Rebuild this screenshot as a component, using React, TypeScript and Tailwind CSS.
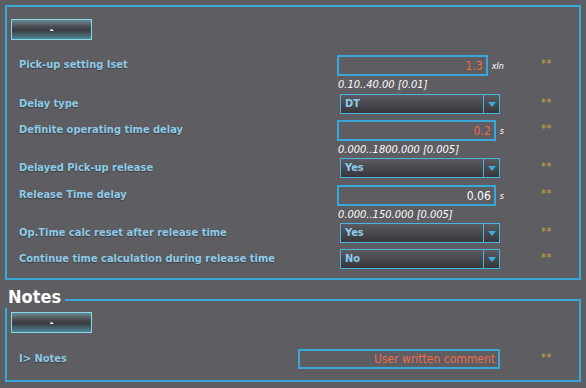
import { ReactNode } from "react";

const font = { fontFamily: "Tahoma, 'DejaVu Sans Condensed', 'DejaVu Sans', sans-serif" };

function Stars() {
  return <span className="w-[40px] pl-[37px] pt-[3px] text-[11px] leading-none tracking-[0.5px] text-[#c9a83a]">**</span>;
}

function Label({ children, w = "w-[330px]" }: { children: ReactNode; w?: string }) {
  return (
    <div className={`${w} pl-[12px] text-[11px] font-bold text-[#8ecbe8] [text-shadow:0_1px_1px_rgba(0,0,0,0.35)]`}>
      {children}
    </div>
  );
}

function MinusButton() {
  return (
    <div className="ml-[4px] flex h-[21px] w-[81px] items-center justify-center border border-[#86d6ec] bg-[linear-gradient(180deg,#6c8a92_0%,#4a4c52_35%,#3b3c41_55%,#4f8796_100%)] text-[10px] font-bold leading-none text-white">
      -
    </div>
  );
}

function NumberRow({ label, value, unit, range, valueColor = "text-[#ec6b4c]" }: { label: string; value: string; unit: string; range: string; valueColor?: string }) {
  return (
    <div className="flex h-[38px] items-start">
      <div className="flex h-[21px] items-center">
        <Label>{label}</Label>
      </div>
      <div className="flex w-[167px] flex-col">
        <div className="flex items-center">
          <div className={`flex h-[21px] w-[163px] items-center justify-end border-2 border-[#38a8d8] pr-[3px] text-[12px] ${valueColor}`}>
            {value}
          </div>
          <span className="pl-[4px] pt-[3px] text-[9px] italic text-white">{unit}</span>
        </div>
        <div className="pl-[1px] pt-[3px] text-[11px] italic leading-none text-white">{range}</div>
      </div>
      <Stars />
    </div>
  );
}

function SelectRow({ label, value, h = "h-[26px]" }: { label: string; value: string; h?: string }) {
  return (
    <div className={`flex items-start ${h}`}>
      <div className="flex h-[20px] items-center">
        <Label>{label}</Label>
      </div>
      <div className="flex w-[167px]">
        <div className="ml-[3px] flex h-[20px] w-[160px] border border-[#4ab4de] bg-[linear-gradient(180deg,#5b5b61_0%,#48484e_50%,#36363b_100%)]">
          <div className="flex flex-1 items-center pl-[4px] text-[11px] font-bold text-[#8ecbe8]">{value}</div>
          <div className="flex w-[16px] items-center justify-center border-l border-[#4ab4de]">
            <svg width="8" height="5" viewBox="0 0 8 5">
              <path d="M0 0h8L4 5z" fill="#38b0e4" />
            </svg>
          </div>
        </div>
      </div>
      <Stars />
    </div>
  );
}

export default function App() {
  return (
    <div className="h-[388px] w-[586px] overflow-hidden bg-[#5e5d62] px-[5px] pt-[5px]" style={font}>
      <div className="h-[275px] w-[576px] border-2 border-[#38a8d8] pt-[12px]">
        <MinusButton />
        <div className="mt-[15px] flex flex-col">
          <NumberRow label="Pick-up setting Iset" value="1.3" unit="xIn" range="0.10..40.00 [0.01]" />
          <div className="h-[1px]" />
          <SelectRow label="Delay type" value="DT" />
          <NumberRow label="Definite operating time delay" value="0.2" unit="s" range="0.000..1800.000 [0.005]" />
          <SelectRow label="Delayed Pick-up release" value="Yes" h="h-[27px]" />
          <NumberRow label="Release Time delay" value="0.06" unit="s" range="0.000..150.000 [0.005]" valueColor="text-white" />
          <SelectRow label="Op.Time calc reset after release time" value="Yes" />
          <SelectRow label="Continue time calculation during release time" value="No" h="h-[20px]" />
        </div>
      </div>

      <div className="mt-[7px] flex h-[21px] items-start">
        <span className="pl-[3px] text-[18px] font-bold leading-[20px] text-white">Notes</span>
        <div className="ml-[4px] mt-[12px] h-[9px] flex-1 border-r-2 border-t-2 border-[#38a8d8]" />
      </div>
      <div className="h-[74px] w-[576px] border-x-2 border-b-2 border-[#38a8d8] pt-[4px]">
        <MinusButton />
        <div className="mt-[16px] flex items-start">
          <div className="flex h-[20px] items-center">
            <Label w="w-[291px]">I&gt; Notes</Label>
          </div>
          <div className="flex w-[206px]">
            <div className="flex h-[20px] w-[202px] items-center justify-end border-2 border-[#38a8d8] pr-[3px] text-[12px] text-[#ec6b4c]">
              User written comment
            </div>
          </div>
          <Stars />
        </div>
      </div>
    </div>
  );
}
